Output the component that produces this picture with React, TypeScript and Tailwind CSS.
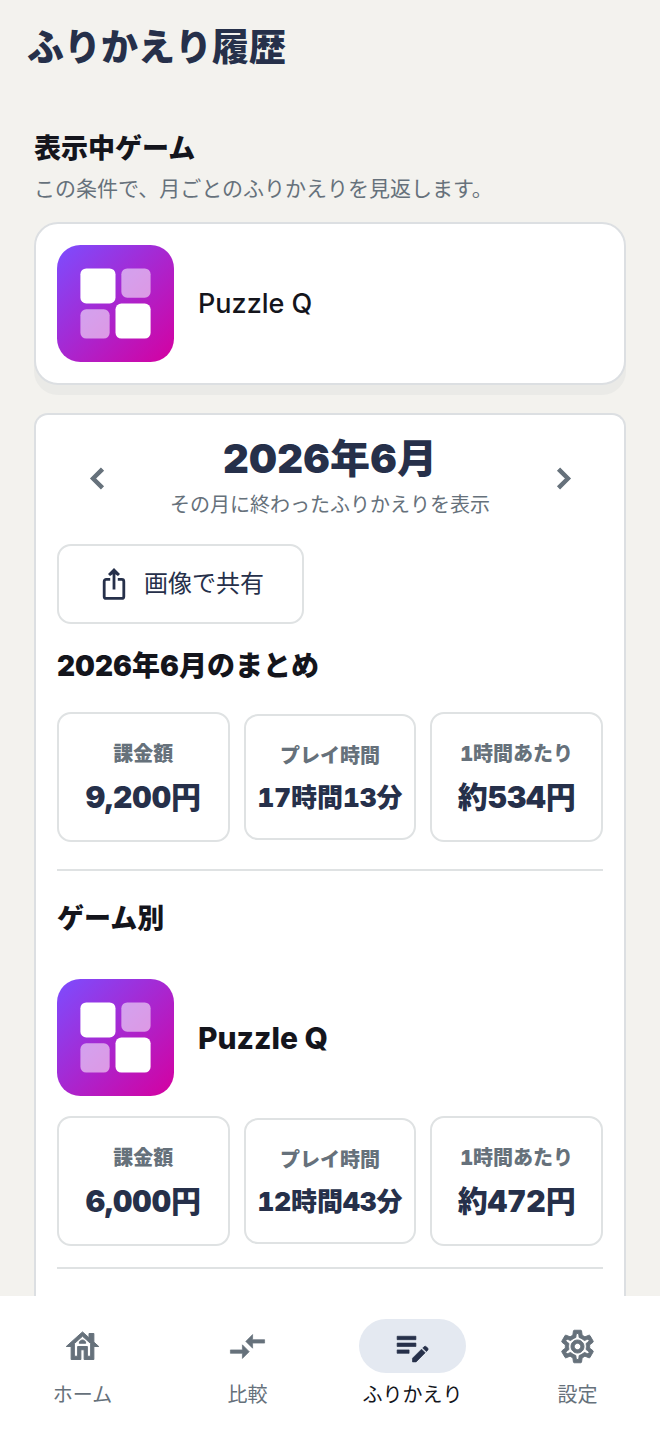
import type { ReactNode } from "react";
import {
  MdChevronLeft,
  MdChevronRight,
  MdCompareArrows,
  MdEditNote,
  MdOutlineHouse,
  MdOutlineSettings,
} from "react-icons/md";

type Stat = { label: string; value: string; compact?: boolean };

const summaryStats: Stat[] = [
  { label: "課金額", value: "9,200円" },
  { label: "プレイ時間", value: "17時間13分", compact: true },
  { label: "1時間あたり", value: "約534円" },
];

const gameStats: Stat[] = [
  { label: "課金額", value: "6,000円" },
  { label: "プレイ時間", value: "12時間43分", compact: true },
  { label: "1時間あたり", value: "約472円" },
];

const ShareIcon = () => (
  <svg
    viewBox="0 0 24 32"
    className="h-[32px] w-[24px]"
    fill="none"
    stroke="currentColor"
    strokeWidth="2.8"
    aria-hidden="true"
  >
    <path d="M8.200 11.400H4.200a2 2 0 0 0-2 2v15a2 2 0 0 0 2 2h15.600a2 2 0 0 0 2-2v-15a2 2 0 0 0-2-2h-4" />
    <path d="M12 21.500V3" />
    <path d="M12 0 6 6l2 2 4-2.500 4 2.500 2-2z" fill="currentColor" stroke="none" />
  </svg>
);

const GameIcon = () => (
  <svg viewBox="0 0 120 120" className="size-[117px] shrink-0" aria-hidden="true">
    <defs>
      <linearGradient id="puzzle" x1="0" y1="0" x2="1" y2="1">
        <stop offset="0" stopColor="#7c4dff" />
        <stop offset="1" stopColor="#d500a0" />
      </linearGradient>
    </defs>
    <rect width="120" height="120" rx="24" fill="url(#puzzle)" />
    <rect x="24" y="24" width="36" height="36" rx="6" fill="#fff" />
    <rect x="66" y="24" width="30" height="30" rx="6" fill="#fff" opacity="0.55" />
    <rect x="24" y="66" width="30" height="30" rx="6" fill="#fff" opacity="0.55" />
    <rect x="60" y="60" width="36" height="36" rx="6" fill="#fff" />
  </svg>
);

const StatCard = ({ label, value, compact }: Stat) => (
  <div
    className={`flex flex-col items-center gap-2 whitespace-nowrap rounded-[14px] border-2 border-[#dfe2e3] pt-[25px] font-black tabular-nums ${
      compact ? "pb-[21px]" : "pb-[23px]"
    }`}
  >
    <dt className="text-[20px] leading-[30px] text-[#66717b]">{label}</dt>
    <dd
      className={`text-[#26304a] ${
        compact ? "text-[26px] leading-[38px]" : "text-[30px] leading-[40px]"
      }`}
    >
      {value}
    </dd>
  </div>
);

const StatGrid = ({ stats }: { stats: Stat[] }) => (
  <dl className="grid grid-cols-3 items-center gap-[14px]">
    {stats.map((stat) => (
      <StatCard key={stat.label} {...stat} />
    ))}
  </dl>
);

const NavItem = ({
  icon,
  label,
  active = false,
}: {
  icon: ReactNode;
  label: string;
  active?: boolean;
}) => (
  <a
    href="#"
    aria-current={active ? "page" : undefined}
    className="flex flex-1 flex-col items-center gap-[7px]"
  >
    <span
      className={`flex h-[54px] w-[107px] items-center justify-center rounded-full [&_path[fill=none]]:stroke-none ${
        active ? "bg-[#e4e9f1] text-[#26304a]" : "text-[#66717b]"
      }`}
    >
      {icon}
    </span>
    <span
      className={`text-[20px] leading-[30px] ${
        active ? "text-[#14151c]" : "text-[#66717b]"
      }`}
    >
      {label}
    </span>
  </a>
);

const MonthButton = ({ label, icon }: { label: string; icon: ReactNode }) => (
  <button
    type="button"
    aria-label={label}
    className="flex size-[80px] items-center justify-center text-[#66717b] [&_path[fill=none]]:stroke-none"
  >
    {icon}
  </button>
);

const App = () => {
  return (
    <div
      lang="ja"
      className="flex min-h-screen flex-col bg-[#f3f2ee] font-['Inter','Noto_Sans_CJK_JP',sans-serif] text-[#14151c]"
    >
      <header className="px-[27px] pt-[21px]">
        <h1 className="text-[37px] leading-[54px] font-black text-[#26304a]">
          ふりかえり履歴
        </h1>
      </header>

      <main className="flex flex-1 flex-col px-[34px] pt-[54px]">
        <h2 className="text-[27px] leading-[40px] font-black">表示中ゲーム</h2>
        <p className="mt-1 text-[21px] leading-[32px] text-[#66717b]">
          この条件で、月ごとのふりかえりを見返します。
        </p>

        <button
          type="button"
          className="mt-[17px] flex items-center gap-6 rounded-[24px] border-2 border-[#dcdfe2] bg-white p-[21px] text-left shadow-[0_10px_0_#eaeae7]"
        >
          <GameIcon />
          <span className="text-[27px] leading-[40px] font-medium">Puzzle Q</span>
        </button>

        <section className="mt-[28px] flex flex-1 flex-col rounded-t-[14px] border-2 border-b-0 border-[#dcdfe2] bg-white px-[21px] pt-[21px] pb-6">
          <div className="flex items-center justify-between">
            <MonthButton
              label="前の月"
              icon={<MdChevronLeft size={41} strokeWidth={0.6} />}
            />
            <div className="text-center">
              <h2 className="text-[40px] leading-[46px] font-black text-[#26304a]">
                2026年6月
              </h2>
              <p className="mt-2 text-[20px] leading-[30px] text-[#66717b]">
                その月に終わったふりかえりを表示
              </p>
            </div>
            <MonthButton
              label="次の月"
              icon={<MdChevronRight size={41} strokeWidth={0.6} />}
            />
          </div>

          <button
            type="button"
            className="mt-6 flex h-[80px] items-center gap-[18px] self-start rounded-[14px] border-2 border-[#dfe2e3] pr-[38px] pl-[43px] text-[24px] leading-[36px] text-[#26304a]"
          >
            <ShareIcon />
            画像で共有
          </button>

          <h3 className="mt-[22px] text-[28px] leading-[40px] font-black">
            2026年6月のまとめ
          </h3>
          <div className="mt-[26px]">
            <StatGrid stats={summaryStats} />
          </div>

          <hr className="mt-[27px] border-t-2 border-[#dfe2e3]" />

          <h3 className="mt-[28px] text-[27px] leading-[40px] font-black">ゲーム別</h3>
          <div className="mt-[40px] flex items-center gap-6">
            <GameIcon />
            <h4 className="text-[30px] leading-[40px] font-extrabold">Puzzle Q</h4>
          </div>
          <div className="mt-5">
            <StatGrid stats={gameStats} />
          </div>

          <hr className="mt-[21px] border-t-2 border-[#dfe2e3]" />
        </section>
      </main>

      <nav
        aria-label="メイン"
        className="sticky bottom-0 flex bg-white pt-[23px] pb-5"
      >
        <NavItem icon={<MdOutlineHouse size={39} strokeWidth={0.6} />} label="ホーム" />
        <NavItem icon={<MdCompareArrows size={41} strokeWidth={0.4} />} label="比較" />
        <NavItem icon={<MdEditNote size={41} strokeWidth={0.4} />} label="ふりかえり" active />
        <NavItem icon={<MdOutlineSettings size={39} strokeWidth={0.6} />} label="設定" />
      </nav>
    </div>
  );
};

export default App;
